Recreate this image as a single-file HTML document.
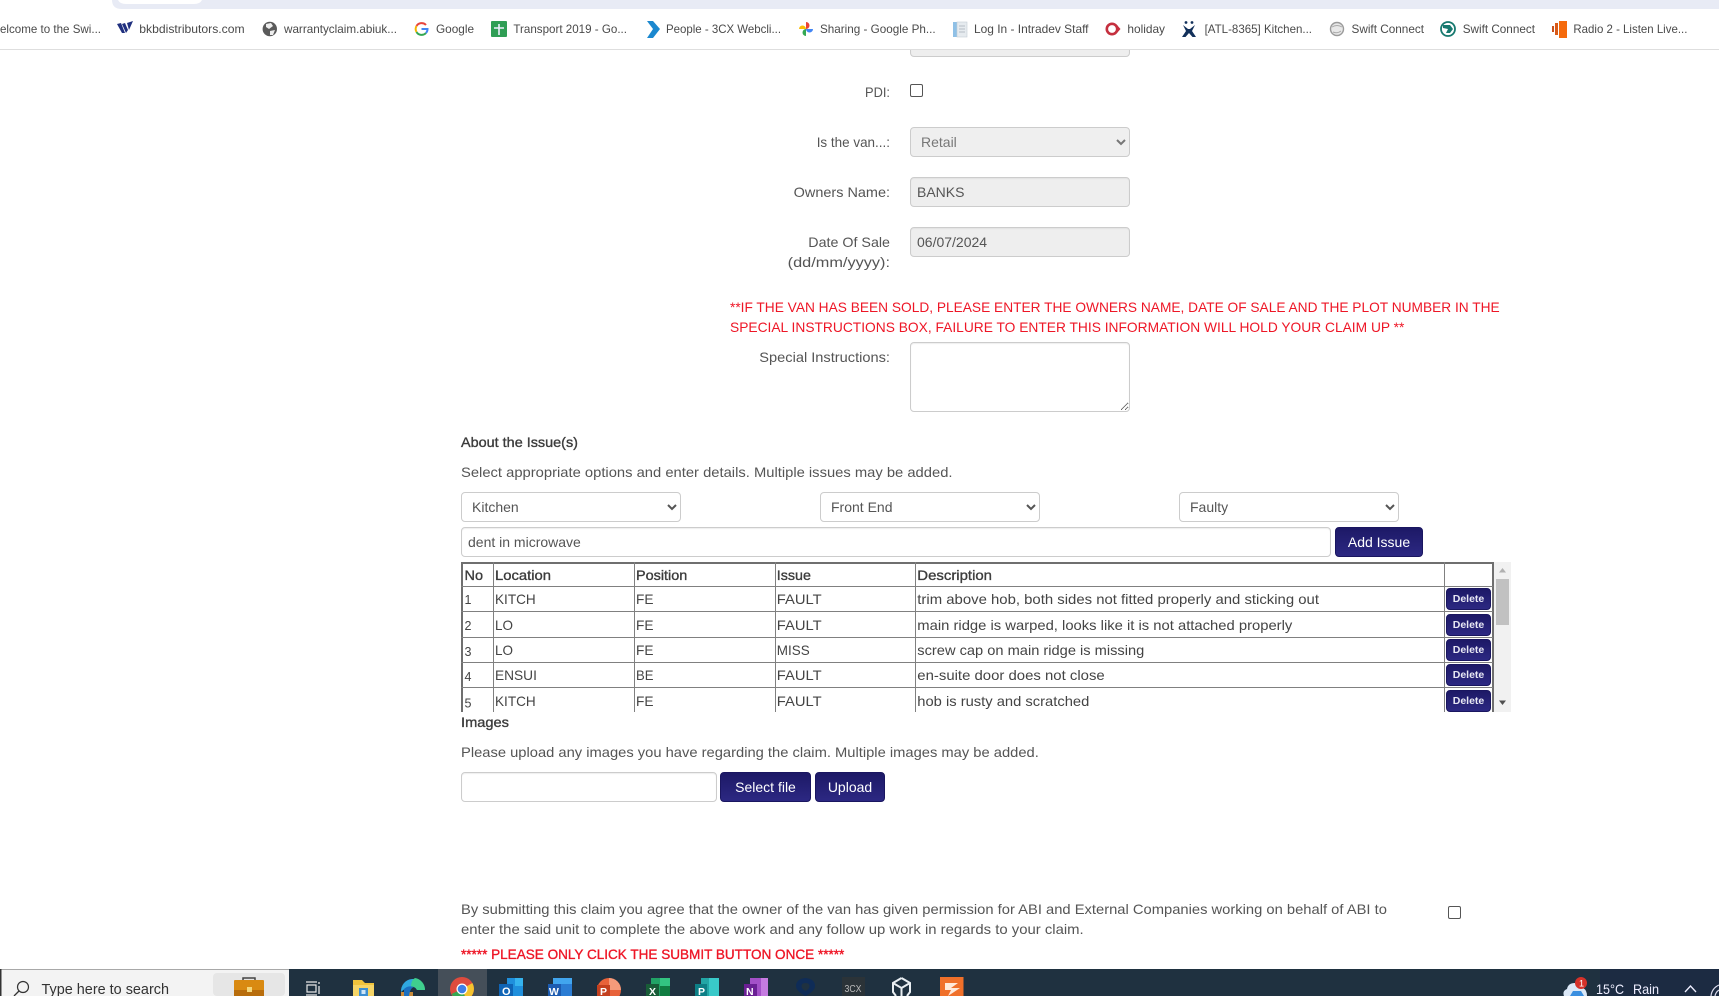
<!DOCTYPE html>
<html lang="en"><head><meta charset="utf-8"><title>Warranty claim</title>
<style>
html,body{margin:0;padding:0;width:1719px;height:996px;overflow:hidden;background:#fff}
body{position:relative;font-family:"Liberation Sans",Arial,sans-serif}
svg{position:absolute;left:0;top:0;display:block}
svg text{font-family:"Liberation Sans",Arial,sans-serif;white-space:pre}
.l{font-size:14px;fill:#555}
.h{font-size:14px;fill:#3c3c3c;stroke:#3c3c3c;stroke-width:.35}
.c{font-size:14px;fill:#444}
.n{font-size:12.5px;fill:#444}
.r{font-size:14px;fill:#ee1626}
.b{font-size:12px;fill:#4a4a4a}
.t{font-size:14.5px;fill:#333}
.w{font-size:14px;fill:#eef}
.f{position:absolute;box-sizing:border-box;margin:0;font:14px "Liberation Sans",Arial,sans-serif;color:#555;border:1px solid #ccc;border-radius:4px;background:#fff;box-shadow:inset 0 1px 1px rgba(0,0,0,.07);outline:0}
input.f{padding:0 6px}
select.f{padding:0 6px;box-shadow:none}
.dis{background:#eee;box-shadow:inset 0 1px 1px rgba(0,0,0,.05);opacity:1}
.btn{position:absolute;box-sizing:border-box;margin:0;padding:0;font:14px "Liberation Sans",Arial,sans-serif;color:#fff;border:1px solid #1a1660;border-radius:4px;background:linear-gradient(#1d1966,#2c2882)}
.del{font-size:10.5px;font-weight:700;width:45px;height:22px;left:986px;color:#e8e8f4}
.ck{position:absolute;margin:0;box-sizing:border-box;width:13px;height:13px;appearance:none;-webkit-appearance:none;border:1px solid #555;border-radius:2px;background:#fff}
</style></head><body>

<svg width="1719" height="996" viewBox="0 0 1719 996">
<!-- browser chrome -->
<path d="M112 0H1719V9H122Q112 9 112 0Z" fill="#e8ebf5"/>
<path d="M118 0H202Q200 4 194 4H126Q120 4 118 0Z" fill="#fff"/>
<rect x="0" y="49" width="1719" height="1" fill="#dedede"/>

<text class="b" x="0" y="33" textLength="101" lengthAdjust="spacingAndGlyphs">elcome to the Swi...</text>
<path d="M117 24l4-1 4 10h-3zM122 24l3-1 3 7-2 3zM127 23l6-2-4 9z" fill="#20307f"/>
<text class="b" x="139.3" y="33" textLength="105.3" lengthAdjust="spacingAndGlyphs">bkbdistributors.com</text>
<circle cx="269.8" cy="29" r="7.2" fill="#5a5a5a"/><path d="M266 24l5-1 2 3-4 3-3-2zM270 31l5-1-2 5-3 0z" fill="#eee"/>
<text class="b" x="284" y="33" textLength="113" lengthAdjust="spacingAndGlyphs">warrantyclaim.abiuk...</text>
<path d="M426 25a6 6 0 0 0-9.5 1" fill="none" stroke="#e8453c" stroke-width="2"/><path d="M416.5 26a6 6 0 0 0 0 6" fill="none" stroke="#f4b400" stroke-width="2"/><path d="M416.5 32a6 6 0 0 0 9.5 1" fill="none" stroke="#34a853" stroke-width="2"/><path d="M426 33a6 6 0 0 0 1.5-4h-6" fill="none" stroke="#4285f4" stroke-width="2"/>
<text class="b" x="436" y="33" textLength="38" lengthAdjust="spacingAndGlyphs">Google</text>
<rect x="491" y="21" width="16" height="16" rx="1" fill="#2f9e55"/><path d="M499 24v11M494 28h10" stroke="#eef" stroke-width="1.6"/>
<text class="b" x="513.4" y="33" textLength="113.6" lengthAdjust="spacingAndGlyphs">Transport 2019 - Go...</text>
<path d="M647 21h6l7 8-7 9h-6l6-9z" fill="#1b88cf"/>
<text class="b" x="666" y="33" textLength="115" lengthAdjust="spacingAndGlyphs">People - 3CX Webcli...</text>
<path d="M806 29V22a3.5 3.5 0 0 1 0 7z" fill="#ea4335"/><path d="M806 29h7a3.5 3.5 0 0 1-7 0z" fill="#4285f4"/><path d="M806 29v7a3.5 3.5 0 0 1 0-7z" fill="#34a853"/><path d="M806 29h-7a3.5 3.5 0 0 1 7 0z" fill="#fbbc05"/>
<text class="b" x="820" y="33" textLength="115.6" lengthAdjust="spacingAndGlyphs">Sharing - Google Ph...</text>
<rect x="953" y="22" width="4" height="15" fill="#8fc0e6"/><rect x="957" y="22" width="10" height="15" fill="#e6ebef" stroke="#c4ccd4" stroke-width=".6"/><path d="M959 26h6M959 29h6M959 32h6" stroke="#b5bdc5"/>
<text class="b" x="974" y="33" textLength="114.5" lengthAdjust="spacingAndGlyphs">Log In - Intradev Staff</text>
<circle cx="1112" cy="29" r="5.2" fill="none" stroke="#c5303f" stroke-width="2.6"/><path d="M1117 25l3.5 4-3.500 4z" fill="#c5303f"/>
<text class="b" x="1127.4" y="33" textLength="37.6" lengthAdjust="spacingAndGlyphs">holiday</text>
<circle cx="1186" cy="22.5" r="1.4" fill="#12305a"/><circle cx="1192" cy="22.5" r="1.4" fill="#12305a"/><path d="M1183 25l5 4 2 0 5-4-3 6 4 6h-3.500l-3.500-4-3.500 4H1182l4-6z" fill="#12305a"/>
<text class="b" x="1204.6" y="33" textLength="107.4" lengthAdjust="spacingAndGlyphs">[ATL-8365] Kitchen...</text>
<circle cx="1337" cy="29" r="6.5" fill="#e8e8e8" stroke="#9a9a9a" stroke-width="1.4"/><path d="M1332 27q5-3 10 0M1333 32q4 2 8-1" fill="none" stroke="#aaa"/>
<text class="b" x="1351.5" y="33" textLength="72.5" lengthAdjust="spacingAndGlyphs">Swift Connect</text>
<circle cx="1448" cy="29" r="7" fill="#fff" stroke="#17796f" stroke-width="1.8"/><path d="M1443 25h7l3 4-3 4h-4l2-4-5-1z" fill="#17796f"/>
<text class="b" x="1462.7" y="33" textLength="72.3" lengthAdjust="spacingAndGlyphs">Swift Connect</text>
<rect x="1552" y="26" width="2" height="6" fill="#c8501a"/><rect x="1555" y="23" width="3" height="12" fill="#d95a18"/><rect x="1559" y="21" width="8" height="17" fill="#f56a0c"/>
<text class="b" x="1573.4" y="33" textLength="114" lengthAdjust="spacingAndGlyphs">Radio 2 - Listen Live...</text>

<!-- labels -->
<text class="l" x="865" y="97" textLength="25" lengthAdjust="spacingAndGlyphs">PDI:</text>
<text class="l" x="816.7" y="147" textLength="73.3" lengthAdjust="spacingAndGlyphs">Is the van...:</text>
<text class="l" x="793.7" y="197" textLength="96.3" lengthAdjust="spacingAndGlyphs">Owners Name:</text>
<text class="l" x="808.3" y="247" textLength="81.7" lengthAdjust="spacingAndGlyphs">Date Of Sale</text>
<text class="l" x="787.7" y="267" textLength="102.3" lengthAdjust="spacingAndGlyphs">(dd/mm/yyyy):</text>
<text class="r" x="730" y="312" textLength="769.7" lengthAdjust="spacingAndGlyphs">**IF THE VAN HAS BEEN SOLD, PLEASE ENTER THE OWNERS NAME, DATE OF SALE AND THE PLOT NUMBER IN THE</text>
<text class="r" x="730" y="332" textLength="674.4" lengthAdjust="spacingAndGlyphs">SPECIAL INSTRUCTIONS BOX, FAILURE TO ENTER THIS INFORMATION WILL HOLD YOUR CLAIM UP **</text>
<text class="l" x="759.3" y="362" textLength="130.7" lengthAdjust="spacingAndGlyphs">Special Instructions:</text>
<text class="h" x="461" y="447" textLength="117" lengthAdjust="spacingAndGlyphs">About the Issue(s)</text>
<text class="l" x="461" y="477" textLength="491.5" lengthAdjust="spacingAndGlyphs">Select appropriate options and enter details. Multiple issues may be added.</text>
<text class="h" x="461" y="727" textLength="48" lengthAdjust="spacingAndGlyphs">Images</text>
<text class="l" x="461" y="757" textLength="577.8" lengthAdjust="spacingAndGlyphs">Please upload any images you have regarding the claim. Multiple images may be added.</text>
<text class="l" x="461" y="914" textLength="925.9" lengthAdjust="spacingAndGlyphs">By submitting this claim you agree that the owner of the van has given permission for ABI and External Companies working on behalf of ABI to</text>
<text class="l" x="461" y="934" textLength="622.7" lengthAdjust="spacingAndGlyphs">enter the said unit to complete the above work and any follow up work in regards to your claim.</text>
<text class="r" x="461" y="959" textLength="383.3" lengthAdjust="spacingAndGlyphs" style="stroke:#ee1626;stroke-width:.35">***** PLEASE ONLY CLICK THE SUBMIT BUTTON ONCE *****</text>

<!-- scrollbar -->
<rect x="1494" y="562" width="17" height="150" fill="#f1f1f1"/>
<rect x="1496" y="579" width="13" height="46" fill="#c1c1c1"/>
<path d="M1502.5 568l3.500 4.500h-7z" fill="#b0b0b0"/>
<path d="M1502.5 705l3.500-4.500h-7z" fill="#505050"/>

<!-- taskbar -->
<rect x="0" y="969" width="1719" height="27" fill="#1f3140"/>
<rect x="1600" y="969" width="119" height="27" fill="#1c2b42"/>
<rect x="0" y="969" width="289" height="27" fill="#f3f3f3"/>
<rect x="0" y="969" width="289" height="1" fill="#a8a8a8"/>
<rect x="0" y="969" width="1.5" height="27" fill="#333"/>
<rect x="213" y="973" width="72" height="23" rx="4" fill="#e6e6e6"/>
<circle cx="23" cy="987" r="5.5" fill="none" stroke="#333" stroke-width="1.2"/><path d="M19 991l-5 5" stroke="#333" stroke-width="1.3"/>
<text class="t" x="41.5" y="994" textLength="127.5" lengthAdjust="spacingAndGlyphs">Type here to search</text>
<path d="M243 981v-3h12v3" fill="none" stroke="#444" stroke-width="1.5"/><rect x="234" y="980" width="30" height="16" rx="1" fill="#d98a12"/><rect x="234" y="990" width="30" height="6" fill="#b86d0c"/><rect x="247" y="987" width="5" height="5" fill="#f5d77a"/>
<rect x="438" y="969" width="49" height="27" fill="#454f59"/>
<!-- task view -->
<path d="M306 982h11M306 995h11M307 985h9v7h-9z" fill="none" stroke="#e6e6e6" stroke-width="1.2"/><path d="M319 982v2M319 986v8" stroke="#e6e6e6" stroke-width="1.3"/>
<!-- explorer -->
<path d="M353 980h9l3 3h9v13h-21z" fill="#f0c33c"/><rect x="353" y="985" width="21" height="11" fill="#f6d567"/><rect x="359" y="988" width="9" height="8" fill="#3d8fd1"/><rect x="361.5" y="990" width="4" height="4" fill="#cfe6f7"/>
<!-- edge -->
<path d="M401 992a12 12 0 0 1 24-2h-8q-2-4-7-3-5 1-9 5z" fill="#2fa8e0"/><path d="M415 978a12 12 0 0 1 10 12h-8q-2-4-6-3 0-7 4-9z" fill="#3fcf8e"/><rect x="401" y="992" width="12" height="4" fill="#c98a3a"/><path d="M404 989q4-4 10-2-4 1-5 9h-5z" fill="#1b6fc0"/>
<!-- chrome -->
<circle cx="462" cy="989" r="12" fill="#de4b3e"/><path d="M462 989l10.400-6a12 12 0 0 1-6 17z" fill="#f5c42f"/><path d="M462 989l4.400 11a12 12 0 0 1-14.800-6z" fill="#36a853"/><circle cx="462" cy="989" r="5.5" fill="#fff"/><circle cx="462" cy="989" r="4.3" fill="#3f7fe6"/>
<!-- outlook -->
<rect x="507" y="978" width="16" height="18" fill="#1f8fdc"/><rect x="515" y="978" width="8" height="8" fill="#35b3ee"/><rect x="499" y="984" width="14" height="12" fill="#0f64b5"/><text x="502" y="995" style="font-size:11px;font-weight:700;fill:#fff">O</text>
<!-- word -->
<rect x="553" y="978" width="19" height="18" fill="#2b7cd3"/><rect x="553" y="978" width="19" height="6" fill="#41a5ee"/><rect x="548" y="984" width="13" height="12" fill="#1c5bb0"/><text x="549" y="995" style="font-size:10.5px;font-weight:700;fill:#fff">W</text>
<!-- powerpoint -->
<circle cx="609" cy="990" r="12" fill="#e8623a"/><path d="M609 978a12 12 0 0 1 12 12h-12z" fill="#f49a7a"/><rect x="597" y="985" width="13" height="11" fill="#c4401f"/><text x="600" y="995" style="font-size:10.5px;font-weight:700;fill:#fff">P</text>
<!-- excel -->
<rect x="651" y="978" width="19" height="18" fill="#21a366"/><rect x="660" y="978" width="10" height="8" fill="#33c481"/><rect x="660" y="986" width="10" height="10" fill="#107c41"/><rect x="646" y="984" width="13" height="12" fill="#185c37"/><text x="649" y="995" style="font-size:10.5px;font-weight:700;fill:#fff">X</text>
<!-- publisher -->
<rect x="701" y="978" width="18" height="18" fill="#22a6a6"/><rect x="709" y="978" width="10" height="18" fill="#39c9c9"/><rect x="695" y="984" width="12" height="12" fill="#0d7f86"/><text x="698" y="995" style="font-size:10.5px;font-weight:700;fill:#fff">P</text>
<!-- onenote -->
<rect x="750" y="978" width="18" height="18" fill="#a350c8"/><rect x="761" y="978" width="7" height="18" fill="#c57be0"/><rect x="744" y="984" width="13" height="12" fill="#6a1f94"/><text x="746" y="995" style="font-size:10.5px;font-weight:700;fill:#fff">N</text>
<!-- dark icon -->
<path d="M805.500 978q9.500 1 9.500 8 0 5-9.500 10-9.500-5-9.500-10 0-7 9.500-8zM805.500 983q-4 0-4 3t4 5q4-2 4-5t-4-3z" fill="#0f2c57" fill-rule="evenodd"/>
<!-- 3cx -->
<rect x="842" y="977" width="23" height="19" fill="#2b3338"/><text x="844.5" y="992" textLength="17" lengthAdjust="spacingAndGlyphs" style="font-size:10px;fill:#bbb">3CX</text>
<!-- cube -->
<path d="M901.500 978l8.500 5v9l-3 4M901.500 978l-8.500 5v9l3 4M893 983l8.500 5 8.500-5M901.500 988v8" fill="none" stroke="#e9eef2" stroke-width="2"/>
<!-- orange -->
<rect x="940" y="977" width="23.5" height="19" fill="#f0702a"/><path d="M945 983h13l-7 5 9 0-12 8 3-6-6 0z" fill="#ffe9da"/>
<!-- tray -->
<path d="M1564 996q-2-5 3-7 1-6 8-6 6 0 8 5 4 2 4 8z" fill="#dbe8f7"/><path d="M1570 996l3-5h8l3 5z" fill="#3a8fe0"/>
<circle cx="1581" cy="983" r="6" fill="#d6322a"/><text x="1579" y="986.5" style="font-size:9px;fill:#fff">1</text>
<text class="w" x="1596" y="994" textLength="28" lengthAdjust="spacingAndGlyphs">15°C</text>
<text class="w" x="1633" y="994" textLength="26" lengthAdjust="spacingAndGlyphs">Rain</text>
<path d="M1685 992l5.500-6 5.500 6" fill="none" stroke="#eef" stroke-width="1.3"/>
<path d="M1711 996a13 13 0 0 1 8-11M1715 996a9 9 0 0 1 4-6" fill="none" stroke="#dde" stroke-width="1.2"/>
</svg>

<!-- top partial field -->
<div class="f dis" style="left:910px;top:27px;width:220px;height:30px;clip-path:inset(23px -2px -2px -2px)"></div>

<input type="checkbox" class="ck" style="left:910px;top:84px">
<select class="f dis" style="left:910px;top:127px;width:220px;height:30px;color:#777;background:#efefef" disabled><option>Retail</option></select>
<input class="f dis" style="left:910px;top:177px;width:220px;height:30px" value="BANKS" disabled>
<input class="f dis" style="left:910px;top:227px;width:220px;height:30px" value="06/07/2024" disabled>
<textarea class="f" style="left:910px;top:342px;width:220px;height:70px"></textarea>

<select class="f" style="left:461px;top:492px;width:220px;height:30px"><option>Kitchen</option></select>
<select class="f" style="left:820px;top:492px;width:220px;height:30px"><option>Front End</option></select>
<select class="f" style="left:1179px;top:492px;width:220px;height:30px"><option>Faulty</option></select>
<input class="f" style="left:461px;top:527px;width:870px;height:30px" value="dent in microwave">
<button class="btn" style="left:1335px;top:527px;width:88px;height:30px">Add Issue</button>

<!-- issue table -->
<div style="position:absolute;left:460px;top:562px;width:1034px;height:150px;overflow:hidden">
<svg width="1034" height="150" viewBox="460 562 1034 150">
<g fill="#808080">
<rect x="461" y="562" width="1033" height="2" fill="#6f6f6f"/>
<rect x="461" y="562" width="2" height="150" fill="#6f6f6f"/>
<rect x="1492" y="562" width="2" height="150" fill="#6f6f6f"/>
<rect x="493" y="562" width="1" height="150"/><rect x="634" y="562" width="1" height="150"/><rect x="775" y="562" width="1" height="150"/><rect x="915" y="562" width="1" height="150"/><rect x="1444" y="562" width="1" height="150"/>
<rect x="461" y="586" width="1032" height="1"/><rect x="461" y="611" width="1032" height="1"/><rect x="461" y="637" width="1032" height="1"/><rect x="461" y="662" width="1032" height="1"/><rect x="461" y="687" width="1032" height="1"/>
</g>
<text class="h" x="464.5" y="580" textLength="18.500" lengthAdjust="spacingAndGlyphs">No</text>
<text class="h" x="495" y="580" textLength="56" lengthAdjust="spacingAndGlyphs">Location</text>
<text class="h" x="636" y="580" textLength="51.3" lengthAdjust="spacingAndGlyphs">Position</text>
<text class="h" x="776.8" y="580" textLength="34.1" lengthAdjust="spacingAndGlyphs">Issue</text>
<text class="h" x="917.3" y="580" textLength="74.7" lengthAdjust="spacingAndGlyphs">Description</text>

<text class="n" x="464.5" y="604">1</text><text class="c" x="495" y="604" textLength="40.7" lengthAdjust="spacingAndGlyphs">KITCH</text><text class="c" x="636" y="604" textLength="17.5" lengthAdjust="spacingAndGlyphs">FE</text><text class="c" x="776.8" y="604" textLength="44.8" lengthAdjust="spacingAndGlyphs">FAULT</text><text class="c" x="917.3" y="604" textLength="401.7" lengthAdjust="spacingAndGlyphs">trim above hob, both sides not fitted properly and sticking out</text>

<text class="n" x="464.5" y="630">2</text><text class="c" x="495" y="630" textLength="18" lengthAdjust="spacingAndGlyphs">LO</text><text class="c" x="636" y="630" textLength="17.5" lengthAdjust="spacingAndGlyphs">FE</text><text class="c" x="776.8" y="630" textLength="44.8" lengthAdjust="spacingAndGlyphs">FAULT</text><text class="c" x="917.3" y="630" textLength="375" lengthAdjust="spacingAndGlyphs">main ridge is warped, looks like it is not attached properly</text>

<text class="n" x="464.5" y="656">3</text><text class="c" x="495" y="655" textLength="18" lengthAdjust="spacingAndGlyphs">LO</text><text class="c" x="636" y="655" textLength="17.5" lengthAdjust="spacingAndGlyphs">FE</text><text class="c" x="776.8" y="655" textLength="32.9" lengthAdjust="spacingAndGlyphs">MISS</text><text class="c" x="917.3" y="655" textLength="227" lengthAdjust="spacingAndGlyphs">screw cap on main ridge is missing</text>

<text class="n" x="464.5" y="681">4</text><text class="c" x="495" y="680" textLength="41.9" lengthAdjust="spacingAndGlyphs">ENSUI</text><text class="c" x="636" y="680" textLength="17.5" lengthAdjust="spacingAndGlyphs">BE</text><text class="c" x="776.8" y="680" textLength="44.8" lengthAdjust="spacingAndGlyphs">FAULT</text><text class="c" x="917.3" y="680" textLength="187.4" lengthAdjust="spacingAndGlyphs">en-suite door does not close</text>

<text class="n" x="464.5" y="707.5">5</text><text class="c" x="495" y="706" textLength="40.7" lengthAdjust="spacingAndGlyphs">KITCH</text><text class="c" x="636" y="706" textLength="17.5" lengthAdjust="spacingAndGlyphs">FE</text><text class="c" x="776.8" y="706" textLength="44.8" lengthAdjust="spacingAndGlyphs">FAULT</text><text class="c" x="917.3" y="706" textLength="172" lengthAdjust="spacingAndGlyphs">hob is rusty and scratched</text>
</svg>
<button class="btn del" style="top:26px">Delete</button>
<button class="btn del" style="top:52px">Delete</button>
<button class="btn del" style="top:77px">Delete</button>
<button class="btn del" style="top:102px">Delete</button>
<button class="btn del" style="top:128px">Delete</button>
</div>

<input class="f" style="left:461px;top:772px;width:256px;height:30px">
<button class="btn" style="left:720px;top:772px;width:91px;height:30px">Select file</button>
<button class="btn" style="left:815px;top:772px;width:70px;height:30px">Upload</button>
<input type="checkbox" class="ck" style="left:1448px;top:906px">
</body></html>
